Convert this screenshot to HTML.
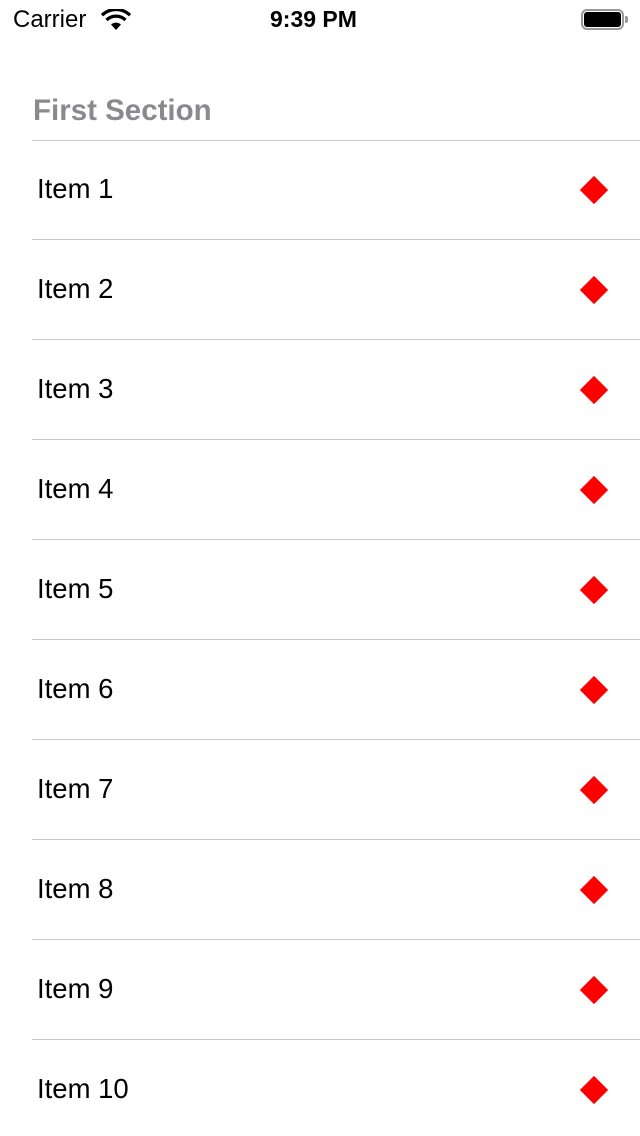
<!DOCTYPE html>
<html><head><meta charset="utf-8"><style>
body{margin:0;width:640px;height:1136px;background:#fff;font-family:"Liberation Sans",sans-serif;position:relative;overflow:hidden}
.sb{position:absolute;top:0;left:0;width:640px;height:40px}
.hdr{position:absolute;left:33px;top:94px;font-size:29.5px;font-weight:bold;color:#8a8a8e}
.sep{position:absolute;left:32px;right:0;height:1px;background:#c8c7cc}
.it{position:absolute;left:37px;font-size:27.5px;color:#000}
.d{position:absolute;left:584px;width:20px;height:20px;background:#f00;transform:rotate(45deg)}
</style></head><body>
<div class="sb">
<span style="position:absolute;left:13px;top:6px;font-size:24px">Carrier</span>
<svg style="position:absolute;left:100px;top:9px" width="32" height="22" viewBox="0 0 32 22"><path d="M16 21 L11 15.5 A7.5 7.5 0 0 1 21 15.5 Z" fill="#000"/><path d="M6.5 11 A13.5 13.5 0 0 1 25.5 11" stroke="#000" stroke-width="3.2" fill="none"/><path d="M2 6.2 A20 20 0 0 1 30 6.2" stroke="#000" stroke-width="3.2" fill="none"/></svg>
<span style="position:absolute;left:270px;top:6px;font-size:23px;font-weight:bold">9:39 PM</span>
<div style="position:absolute;left:581px;top:9px;width:43px;height:21px;border:2px solid #999;border-radius:6px;box-sizing:border-box"></div>
<div style="position:absolute;left:584px;top:12px;width:37px;height:15px;background:#000;border-radius:3px"></div>
<div style="position:absolute;left:625px;top:16px;width:3px;height:7px;background:#999;border-radius:0 2px 2px 0"></div>
</div>
<div class="hdr">First Section</div>
<div class="sep" style="top:140px"></div>
<div class="it" style="top:173px">Item 1</div><div class="d" style="top:180px"></div><div class="sep" style="top:239px"></div>
<div class="it" style="top:273px">Item 2</div><div class="d" style="top:280px"></div><div class="sep" style="top:339px"></div>
<div class="it" style="top:373px">Item 3</div><div class="d" style="top:380px"></div><div class="sep" style="top:439px"></div>
<div class="it" style="top:473px">Item 4</div><div class="d" style="top:480px"></div><div class="sep" style="top:539px"></div>
<div class="it" style="top:573px">Item 5</div><div class="d" style="top:580px"></div><div class="sep" style="top:639px"></div>
<div class="it" style="top:673px">Item 6</div><div class="d" style="top:680px"></div><div class="sep" style="top:739px"></div>
<div class="it" style="top:773px">Item 7</div><div class="d" style="top:780px"></div><div class="sep" style="top:839px"></div>
<div class="it" style="top:873px">Item 8</div><div class="d" style="top:880px"></div><div class="sep" style="top:939px"></div>
<div class="it" style="top:973px">Item 9</div><div class="d" style="top:980px"></div><div class="sep" style="top:1039px"></div>
<div class="it" style="top:1073px">Item 10</div><div class="d" style="top:1080px"></div>
</body></html>
